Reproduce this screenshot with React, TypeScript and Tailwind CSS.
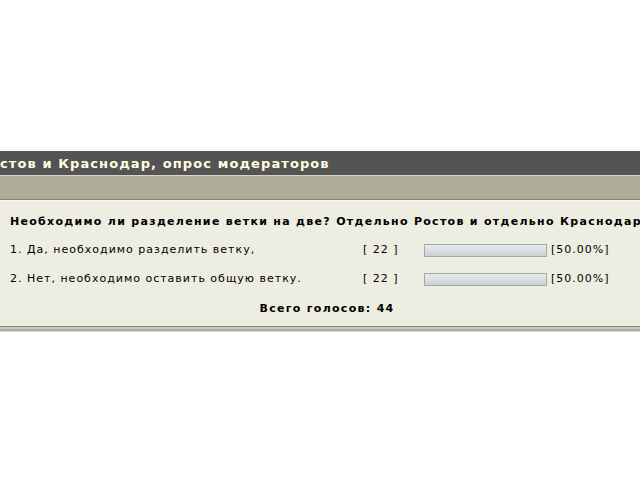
const rows = [
  { label: '1. Да, необходимо разделить ветку,', votes: 22, pct: '50.00%' },
  { label: '2. Нет, необходимо оставить общую ветку.', votes: 22, pct: '50.00%' },
];

const PollRow = ({ label, votes, pct }: { label: string; votes: number; pct: string }) => (
  <div className="flex items-center h-[29px] whitespace-nowrap">
    <div className="w-[363px] pl-[10px]">{label}</div>
    <div className="w-[61px]">[ {votes} ]</div>
    <div className="w-[123px] h-[13px] border border-[#a2a8ae] bg-gradient-to-b from-[#e8ebee] to-[#cdd1d6]" />
    <div className="pl-[4px]">[{pct}]</div>
  </div>
);

export default function App() {
  return (
    <div className="w-[640px] h-[480px] bg-white overflow-hidden text-[11px] text-black tracking-[1px]" style={{ fontFamily: '"DejaVu Sans", Verdana, sans-serif' }}>
      <div className="h-[151px]" />
      <div className="h-[24px] bg-[#545454] flex items-center whitespace-nowrap pt-[2px]">
        <span className="text-[13px] font-bold text-[#fffee0] tracking-[1.1px]">стов и Краснодар, опрос модераторов</span>
      </div>
      <div className="h-[1px] bg-[#d6d5c8]" />
      <div className="h-[23px] bg-[#adac98]" />
      <div className="h-[1px] bg-[#85857a]" />
      <div className="h-[1px] bg-[#f8f8f2]" />
      <div className="bg-[#eeede2] pt-[11px] h-[125px]">
        <div className="pl-[10px] font-bold whitespace-nowrap h-[19px] leading-[19px] tracking-[1.3px]">
          Необходимо ли разделение ветки на две? Отдельно Ростов и отдельно Краснодар
        </div>
        <div className="pt-[5px]">
          {rows.map((r, i) => (
            <PollRow key={i} {...r} />
          ))}
        </div>
        <div className="text-center font-bold pl-[14px] h-[29px] leading-[29px] tracking-[1.3px]">Всего голосов: 44</div>
      </div>
      <div className="h-[1px] bg-[#8c8c86]" />
      <div className="h-[2px] bg-[#c9c8b8]" />
      <div className="h-[2px] bg-[#b1b09e]" />
      <div className="h-[1px] bg-[#d8d8cc]" />
    </div>
  );
}
